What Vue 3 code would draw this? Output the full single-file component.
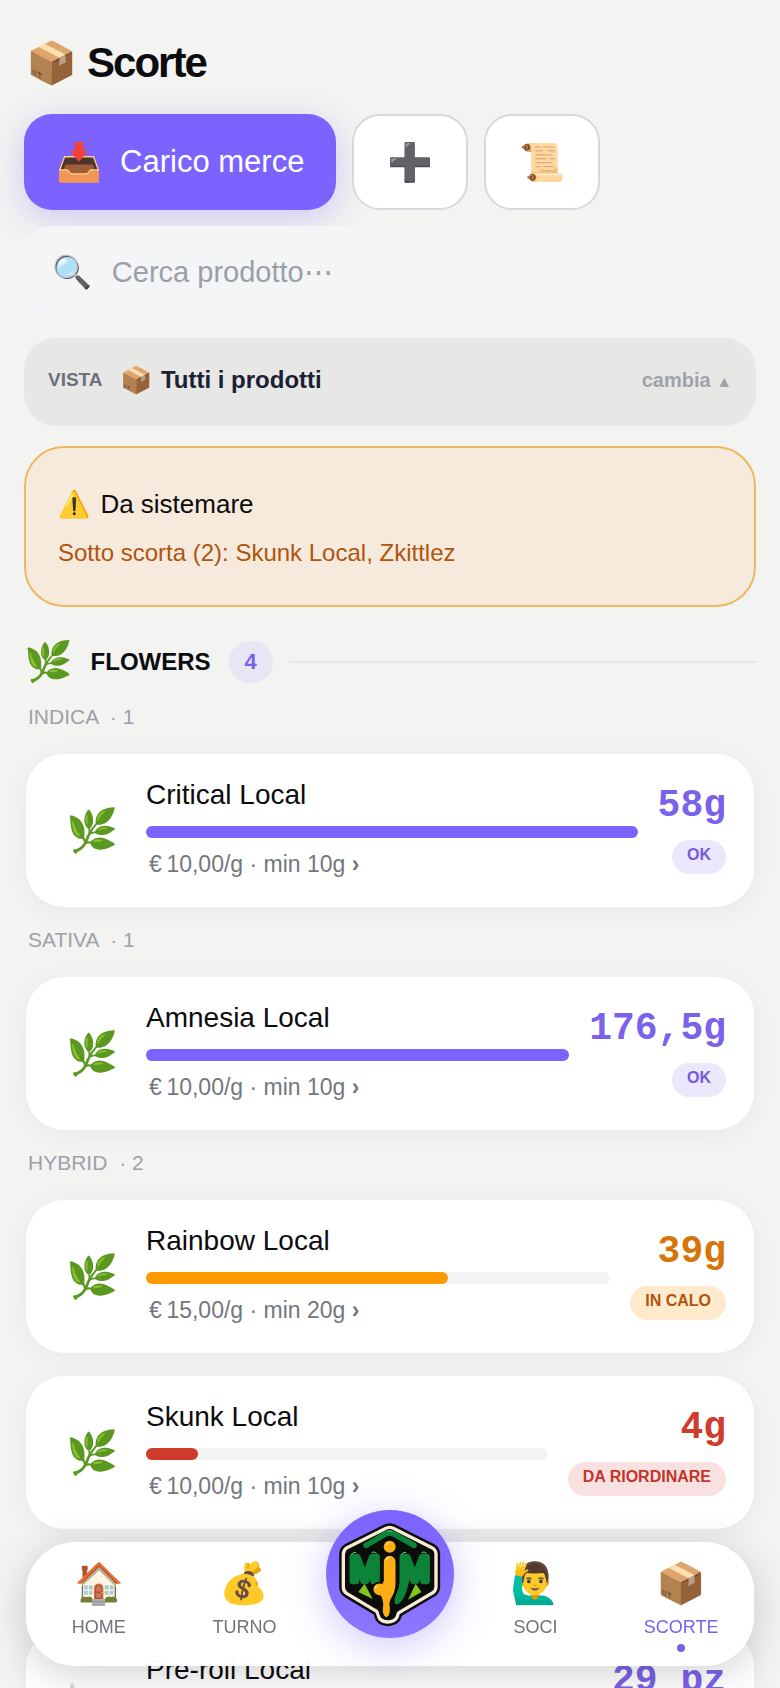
<template>
	<div class="screen">
		<main class="content">
			<h1 class="title"><span class="emoji">📦</span> <span>Scorte</span></h1>

			<!-- Actions -->
			<div class="actions">
				<button class="btn btn-primary"><span class="emoji">📥</span> Carico merce</button>
				<button class="btn btn-icon" aria-label="Nuovo prodotto"><span class="emoji">➕</span></button>
				<button class="btn btn-icon" aria-label="Storico"><span class="emoji">📜</span></button>
			</div>

			<!-- Search -->
			<label class="search">
				<span class="emoji">🔍</span>
				<input v-model="query" type="text" placeholder="Cerca prodotto⋯" aria-label="Cerca prodotto">
			</label>

			<!-- View switch -->
			<button class="view">
				<span class="view-label">VISTA</span>
				<span class="emoji">📦</span>
				<span class="view-name">Tutti i prodotti</span>
				<span class="view-change">cambia <small>▲</small></span>
			</button>

			<!-- Low stock alert -->
			<section class="alert">
				<p class="alert-title"><span class="emoji">⚠️</span> Da sistemare</p>
				<p class="alert-text">Sotto scorta (2): Skunk Local, Zkittlez</p>
			</section>

			<div class="category">
				<span class="emoji">🌿</span>
				<h2>FLOWERS</h2>
				<span class="count">4</span>
				<span class="rule"></span>
			</div>

			<section v-for="group in groups" :key="group.id" class="group" :class="{ untitled: !group.name }">
				<h3 v-if="group.name">{{ group.name }} <span>· {{ group.items.length }}</span></h3>
				<a v-for="item in group.items" :key="item.name" class="card" :class="item.level" href="#">
					<span class="emoji">{{ item.icon }}</span>
					<span class="info">
						<span class="name">{{ item.name }}</span>
						<span class="bar"><span class="fill" :style="{ width: item.fill + '%' }"></span></span>
						<span class="meta">€&#8201;{{ item.price }} · min {{ item.min }} <b>›</b></span>
					</span>
					<span class="stock">
						<span class="qty">{{ item.qty }}</span>
						<span class="pill">{{ labels[ item.level ] }}</span>
					</span>
				</a>
			</section>
		</main>

		<nav class="tabs">
			<a v-for="tab in tabs.slice( 0, 2 )" :key="tab.label" class="tab" href="#">
				<span class="emoji">{{ tab.icon }}</span>{{ tab.label }}
			</a>
			<div class="tab">
				<button class="fab" aria-label="MJM">
					<svg viewBox="48 30 384 384">
						<path d="M239 82 Q246 82 253 86 L366 143 Q378 150 378 163 V260 Q378 272 367 279 L267 338 Q263 341 262 350 Q255 366 232 366 Q208 365 204 343 Q203 335 195 331 L111 281 Q100 274 100 262 V163 Q100 150 111 143 L225 86 Q232 82 239 82 Z"
							fill="#0b0d0a" stroke="#0b0d0a" stroke-width="25" stroke-linejoin="round" />
						<path d="M239 82 Q246 82 253 86 L366 143 Q378 150 378 163 V260 Q378 272 367 279 L267 338 Q263 341 262 350 Q255 366 232 366 Q208 365 204 343 Q203 335 195 331 L111 281 Q100 274 100 262 V163 Q100 150 111 143 L225 86 Q232 82 239 82 Z"
							fill="#0b0d0a" stroke="#fbecd5" stroke-width="10" stroke-linejoin="round" />
						<path d="M168 136 L226 102 Q239 95 252 102 L312 136" fill="none" stroke="#0c8438"
							stroke-width="17" stroke-linecap="round" stroke-linejoin="round" />
						<path d="M232 94 Q239 91 247 94" fill="none" stroke="#64bd70" stroke-width="3" stroke-linecap="round" />
						<path d="M145 276 L164 251 L188 297 Z M334 276 L317 251 L294 299 Z" fill="#83c51e" />
						<path d="M284 220 Q284 276 260 300" fill="none" stroke="#0c8438" stroke-width="26" stroke-linecap="round" />
						<g class="logo-m">
							<text x="120" y="243">M</text>
							<text x="270" y="243">M</text>
						</g>
						<path d="M124 163 Q129 155 137 157 M186 157 Q192 153 199 159 M274 163 Q279 155 287 157 M336 157 Q342 153 349 159"
							fill="none" stroke="#79c58a" stroke-width="3" stroke-linecap="round" />
						<path d="M239 184 V251 Q239 272 230 290 V334 M239 247 Q232 274 208 269" fill="none" stroke="#0b0d0a"
							stroke-width="48" stroke-linecap="round" stroke-linejoin="round" />
						<circle cx="239" cy="140" r="24" fill="#0b0d0a" />
						<path d="M239 185 V250 Q239 268 230 283 M236 252 Q229 275 208 268" fill="none" stroke="#fdae13"
							stroke-width="35" stroke-linecap="round" stroke-linejoin="round" />
						<path d="M213 275 Q217 298 220 312 Q214 346 229 352 Q244 346 238 312 Q240 296 252 277 Z" fill="#fdae13" />
						<circle cx="239" cy="140" r="18" fill="#fdae13" />
						<path d="M230 134 Q232 129 237 128 M228 181 Q229 174 237 173 M195 264 Q198 259 204 260"
							fill="none" stroke="#ffe28b" stroke-width="4" stroke-linecap="round" />
					</svg>
				</button>
			</div>
			<a v-for="tab in tabs.slice( 2 )" :key="tab.label" class="tab" :class="{ active: tab.active }" href="#">
				<span class="emoji">{{ tab.icon }}</span>{{ tab.label }}
			</a>
		</nav>
	</div>
</template>

<script setup>
import { ref } from 'vue'

const query = ref( '' )

const labels = { ok: 'OK', low: 'IN CALO', out: 'DA RIORDINARE' }

const groups = [
	{ id: 1, name: 'INDICA', items: [
		{ name: 'Critical Local', icon: '🌿', price: '10,00/g', min: '10g', qty: '58g', fill: 100, level: 'ok' }
	] },
	{ id: 2, name: 'SATIVA', items: [
		{ name: 'Amnesia Local', icon: '🌿', price: '10,00/g', min: '10g', qty: '176,5g', fill: 100, level: 'ok' }
	] },
	{ id: 3, name: 'HYBRID', items: [
		{ name: 'Rainbow Local', icon: '🌿', price: '15,00/g', min: '20g', qty: '39g', fill: 65, level: 'low' },
		{ name: 'Skunk Local', icon: '🌿', price: '10,00/g', min: '10g', qty: '4g', fill: 13, level: 'out' }
	] },
	{ id: 4, name: '', items: [
		{ name: 'Pre-roll Local', icon: '🚬', price: '10,00/pz', min: '10 pz', qty: '29 pz', fill: 100, level: 'ok' }
	] }
]

const tabs = [
	{ icon: '🏠', label: 'HOME' },
	{ icon: '💰', label: 'TURNO' },
	{ icon: '🙋‍♂️', label: 'SOCI' },
	{ icon: '📦', label: 'SCORTE', active: true }
]
</script>

<style>
body {
	margin: 0;
	background: #f3f3f1;
}
</style>

<style scoped>
.screen {
	height: 100vh;
	overflow: hidden;
	background: #f3f3f1;
	color: #0c0c0e;
	font-family: "Liberation Sans", Arial, sans-serif;
}

.screen * {
	box-sizing: border-box;
}

.content {
	height: 100%;
	padding: 32px 24px 0;
	overflow: hidden;
}

.emoji {
	font-family: "Noto Color Emoji", sans-serif;
	font-weight: 400;
	line-height: 1;
	flex: none;
}

button {
	border: 0;
	font-family: inherit;
	cursor: pointer;
}

a {
	color: inherit;
	text-decoration: none;
}

.title {
	display: flex;
	align-items: center;
	gap: 12px;
	height: 62px;
	margin: 0 0 20px;
	padding-left: 2px;
	font-size: 42px;
	letter-spacing: -2px;
}

.title .emoji {
	font-size: 41px;
}

/* ACTIONS */
.actions {
	display: flex;
	gap: 16px;
}

.btn {
	display: flex;
	align-items: center;
	justify-content: center;
	gap: 18px;
	height: 96px;
	border-radius: 28px;
	font-size: 31px;
}

.btn .emoji {
	font-size: 37px;
}

.btn-primary {
	padding: 0 32px;
	background: #7c62ff;
	color: #fff;
	box-shadow: 0 8px 32px rgba(124, 98, 255, 0.3);
}

.btn-icon {
	width: 116px;
	padding: 0;
	background: #fff;
	border: 2px solid #d8d9dc;
}

/* SEARCH */
.search {
	position: relative;
	display: flex;
	align-items: center;
	gap: 20px;
	height: 94px;
	margin-top: 16px;
	padding: 0 28px 2px;
	border-radius: 28px;
	background: #f3f5f7;
	font-size: 32px;
}

.search input {
	flex: 1;
	min-width: 0;
	padding: 0;
	border: 0;
	outline: 0;
	background: none;
	color: #0c0c0e;
	font-family: inherit;
	font-size: 29px;
}

.search input::placeholder {
	color: #9b9fa8;
	opacity: 1;
}

/* VIEW */
.view {
	display: flex;
	align-items: center;
	width: 100%;
	height: 88px;
	margin-top: 18px;
	padding: 0 24px 4px;
	border-radius: 32px;
	background: #e7e8e6;
	color: #1b2033;
	font-size: 24px;
	font-weight: 700;
}

.view-label {
	margin-right: 18px;
	color: #6d717c;
	font-size: 19px;
}

.view .emoji {
	margin-right: 8px;
	font-size: 26px;
}

.view-change {
	margin-left: auto;
	color: #a0a3ab;
	font-size: 20px;
}

.view-change small {
	font-size: 16px;
}

/* ALERT */
.alert {
	margin-top: 20px;
	padding: 36px 32px 32px;
	border: 2px solid #efb860;
	border-radius: 40px;
	background: #f5eadb;
}

.alert p {
	margin: 0;
}

.alert-title {
	display: flex;
	align-items: center;
	gap: 10px;
	height: 40px;
	font-size: 26px;
}

.alert .alert-text {
	margin-top: 9px;
	color: #b0540f;
	font-size: 24px;
	line-height: 40px;
}

/* CATEGORY */
.category {
	display: flex;
	align-items: center;
	height: 44px;
	margin-top: 33px;
}

.category .emoji {
	font-size: 39px;
}

.category h2 {
	margin: 0 18px;
	font-size: 24px;
}

.count {
	width: 44px;
	border-radius: 22px;
	background: #e8e5f4;
	color: #7a62ea;
	font-size: 22px;
	font-weight: 700;
	line-height: 42px;
	text-align: center;
}

.rule {
	flex: 1;
	height: 2px;
	margin-left: 16px;
	background: #e6e6e4;
}

/* PRODUCTS */
.group {
	padding: 0 2px;
}

.group h3 {
	margin: 0;
	padding: 17px 2px 21px;
	color: #9da1a9;
	font-size: 21px;
	font-weight: 400;
	line-height: 32px;
}

.group h3 span {
	margin-left: 6px;
}

.group.untitled {
	padding-top: 100px;
}

.card {
	display: flex;
	align-items: center;
	gap: 20px;
	height: 153px;
	padding: 0 28px 0 40px;
	border-radius: 38px;
	background: #fff;
	box-shadow: 0 4px 24px rgba(0, 0, 0, 0.05);
}

.card + .card {
	margin-top: 23px;
}

.card .emoji {
	width: 60px;
	font-size: 42px;
}

.info {
	flex: 1;
	min-width: 0;
	padding-bottom: 6px;
}

.info > span {
	display: block;
}

.name {
	font-size: 28px;
	line-height: 34px;
}

.bar {
	height: 12px;
	margin: 14px 0 12px;
	border-radius: 6px;
	background: #f3f4f4;
}

.fill {
	display: block;
	height: 12px;
	border-radius: 6px;
	background: #7c62ff;
}

.meta {
	padding-left: 3px;
	color: #74777e;
	font-size: 23px;
	line-height: 28px;
}

.stock {
	display: flex;
	flex-direction: column;
	align-items: flex-end;
	gap: 14px;
	padding-bottom: 2px;
}

.qty {
	color: #7a62ea;
	font-family: "Liberation Mono", monospace;
	font-size: 38px;
	font-weight: 700;
	line-height: 40px;
}

.pill {
	padding: 0 15px 4px;
	border-radius: 17px;
	background: #ebe7fd;
	color: #735bdc;
	font-size: 16px;
	font-weight: 700;
	line-height: 30px;
}

.low .fill {
	background: #fd9a00;
}

.low .qty {
	color: #d5760a;
}

.low .pill {
	background: #ffebcc;
	color: #b0540f;
}

.out .fill {
	background: #d03a2c;
}

.out .qty {
	color: #cf3b2d;
}

.out .pill {
	background: #f9e1e1;
	color: #c2352b;
}

/* TAB BAR */
.tabs {
	position: fixed;
	right: 26px;
	bottom: 22px;
	left: 26px;
	display: flex;
	height: 124px;
	border-radius: 50px;
	background: rgba(255, 255, 255, 0.98);
	box-shadow: 0 8px 40px rgba(0, 0, 0, 0.18);
}

.tab {
	position: relative;
	display: flex;
	flex: 1;
	flex-direction: column;
	align-items: center;
	gap: 13px;
	padding-top: 22px;
	color: #6f737b;
	font-size: 18px;
}

.tab .emoji {
	font-size: 40px;
}

.tab.active {
	color: #7a62ea;
}

.tab.active::after {
	position: absolute;
	bottom: 14px;
	width: 8px;
	height: 8px;
	border-radius: 50%;
	background: #7a62ea;
	content: "";
}

.fab {
	position: absolute;
	top: -32px;
	width: 128px;
	height: 128px;
	padding: 0;
	border-radius: 50%;
	background: linear-gradient(#7c62ff, #8d76ff);
	box-shadow: 0 8px 40px rgba(124, 98, 255, 0.35);
}

.fab svg {
	display: block;
	width: 100%;
}

.logo-m {
	fill: #0c8438;
	stroke: #0c8438;
	stroke-width: 20px;
	stroke-linejoin: round;
	font-family: "Liberation Sans", Arial, sans-serif;
	font-size: 106px;
	font-weight: 400;
}
</style>
